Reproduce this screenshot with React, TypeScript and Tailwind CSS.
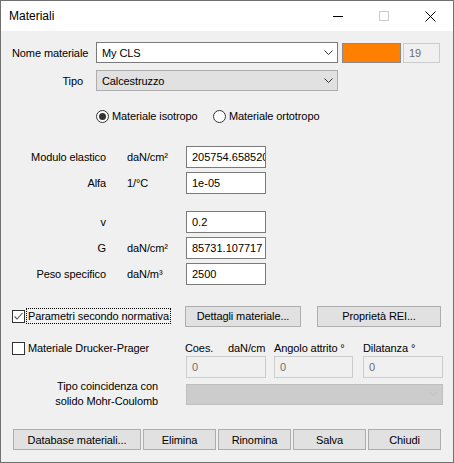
import React from "react";

const F = "font-['Liberation_Sans',sans-serif] text-[11px] leading-[14px] tracking-[-0.1px]";

function Chevron({ color = "#333333" }: { color?: string }) {
  return (
    <svg width="9" height="6" viewBox="0 0 9 6" className="shrink-0">
      <polyline points="0.5,0.5 4.5,4.5 8.5,0.5" fill="none" stroke={color} strokeWidth="1" />
    </svg>
  );
}

function Combo({ text, variant }: { text?: string; variant: "edit" | "list" | "disabled" }) {
  const cls =
    variant === "edit"
      ? "bg-white border-[#7a7a7a]"
      : variant === "list"
      ? "bg-[#e1e1e1] border-[#adadad]"
      : "bg-[#cccccc] border-[#bfbfbf]";
  return (
    <div className={`flex items-center justify-between w-full h-full border ${cls} pl-[5px] pr-[4px]`}>
      <span className="text-black whitespace-nowrap">{text}</span>
      <Chevron color={variant === "disabled" ? "#bfbfbf" : "#333333"} />
    </div>
  );
}

function Input({ value, w = "w-[80px]", disabled }: { value: string; w?: string; disabled?: boolean }) {
  return (
    <div
      className={`${w} h-[22px] shrink-0 border flex items-center pl-[5px] overflow-hidden tracking-normal ${
        disabled ? "bg-[#f0f0f0] border-[#cccccc] text-[#6d6d6d]" : "bg-white border-[#7a7a7a] text-black"
      }`}
    >
      <span className="whitespace-nowrap">{value}</span>
    </div>
  );
}

function Button({ label, w }: { label: string; w: string }) {
  return (
    <div className={`${w} h-[21px] shrink-0 bg-[#e1e1e1] border border-[#adadad] flex items-center justify-center text-black whitespace-nowrap`}>
      {label}
    </div>
  );
}

function Radio({ checked }: { checked?: boolean }) {
  return (
    <div className="w-[13px] h-[13px] rounded-full border border-[#333333] bg-white flex items-center justify-center shrink-0">
      {checked && <div className="w-[7px] h-[7px] rounded-full bg-[#333333]" />}
    </div>
  );
}

function Check({ checked }: { checked?: boolean }) {
  return (
    <div className="w-[13px] h-[13px] border border-[#333333] bg-white flex items-center justify-center shrink-0">
      {checked && (
        <svg width="11" height="11" viewBox="0 0 11 11">
          <polyline points="1.5,5.5 4,8 9.5,2" fill="none" stroke="#555555" strokeWidth="1.1" />
        </svg>
      )}
    </div>
  );
}

function PropRow({ label, unit, value, className = "" }: { label: string; unit: string; value: string; className?: string }) {
  return (
    <div className={`flex items-center h-[22px] ${className}`}>
      <div className="w-[105px] text-right shrink-0 whitespace-nowrap">{label}</div>
      <div className="w-[59px] ml-[21px] shrink-0 whitespace-nowrap">{unit}</div>
      <Input value={value} />
    </div>
  );
}

export default function App() {
  return (
    <div className={`${F} w-[454px] h-[463px] border border-[#707070] bg-[#f0f0f0] flex flex-col text-black`}>
      {/* Title bar */}
      <div className="h-[30px] bg-white flex items-center shrink-0">
        <div className="pl-[8px] flex-1 text-black text-[12px] tracking-normal">Materiali</div>
        <div className="w-[46px] h-full flex items-center justify-center">
          <div className="w-[10px] h-px bg-black" />
        </div>
        <div className="w-[46px] h-full flex items-center justify-center">
          <div className="w-[10px] h-[10px] border border-[#cccccc]" />
        </div>
        <div className="w-[46px] h-full flex items-center justify-center">
          <svg width="11" height="11" viewBox="0 0 11 11">
            <path d="M0.5,0.5 L10.5,10.5 M10.5,0.5 L0.5,10.5" stroke="#000" strokeWidth="1" fill="none" />
          </svg>
        </div>
      </div>

      {/* Nome materiale */}
      <div className="flex items-center h-[21px] mt-[11px]">
        <div className="w-[95px] pl-[11px] shrink-0 whitespace-nowrap">Nome materiale</div>
        <div className="w-[242px] h-[21px] shrink-0">
          <Combo text="My CLS" variant="edit" />
        </div>
        <div className="w-[59px] h-[20px] ml-[4px] bg-[#ff8000] border border-[#8a8a8a] shrink-0" />
        <div className="w-[37px] h-[20px] ml-[2px] border border-[#cccccc] bg-[#f0f0f0] text-[#6d6d6d] flex items-center pl-[5px] shrink-0">
          19
        </div>
      </div>

      {/* Tipo */}
      <div className="flex items-center h-[21px] mt-[7px]">
        <div className="w-[95px] pr-[13px] text-right shrink-0">Tipo</div>
        <div className="w-[242px] h-[21px] shrink-0">
          <Combo text="Calcestruzzo" variant="list" />
        </div>
      </div>

      {/* Radios */}
      <div className="flex items-center h-[16px] mt-[17px] pl-[95px]">
        <div className="flex items-center gap-[3px] w-[117px] shrink-0">
          <Radio checked />
          <span className="whitespace-nowrap">Materiale isotropo</span>
        </div>
        <div className="flex items-center gap-[3px]">
          <Radio />
          <span className="whitespace-nowrap">Materiale ortotropo</span>
        </div>
      </div>

      {/* Properties */}
      <PropRow className="mt-[22px]" label="Modulo elastico" unit="daN/cm²" value="205754.658520" />
      <PropRow className="mt-[4px]" label="Alfa" unit="1/°C" value="1e-05" />
      <PropRow className="mt-[17px]" label="v" unit="" value="0.2" />
      <PropRow className="mt-[4px]" label="G" unit="daN/cm²" value="85731.107717" />
      <PropRow className="mt-[4px]" label="Peso specifico" unit="daN/m³" value="2500" />

      {/* Normativa row */}
      <div className="flex items-center h-[20px] mt-[21px]">
        <div className="w-[184px] pl-[11px] flex items-center shrink-0">
          <Check checked />
          <span className="ml-[1px] px-[1px] border border-dotted border-black leading-[14px] whitespace-nowrap">
            Parametri secondo normativa
          </span>
        </div>
        <Button label="Dettagli materiale..." w="w-[116px] h-[20px]" />
        <div className="ml-[16px]">
          <Button label="Proprietà REI..." w="w-[124px]" />
        </div>
      </div>

      {/* Drucker-Prager */}
      <div className="flex items-center h-[16px] mt-[14px]">
        <div className="w-[184px] pl-[11px] flex items-center gap-[3px] shrink-0">
          <Check />
          <span className="whitespace-nowrap">Materiale Drucker-Prager</span>
        </div>
        <div className="w-[43px] shrink-0">Coes.</div>
        <div className="w-[46px] shrink-0 whitespace-nowrap">daN/cm</div>
        <div className="w-[89px] shrink-0 whitespace-nowrap">Angolo attrito °</div>
        <div className="whitespace-nowrap">Dilatanza °</div>
      </div>
      <div className="flex items-center h-[22px] pl-[185px]">
        <Input value="0" disabled />
        <Input value="0" w="w-[79px] ml-[8px]" disabled />
        <Input value="0" w="w-[80px] ml-[10px]" disabled />
      </div>

      {/* Mohr-Coulomb */}
      <div className="flex items-center h-[30px] mt-[1px]">
        <div className="w-[185px] pr-[28px] text-right shrink-0 leading-[15px]">
          Tipo coincidenza con
          <br />
          solido Mohr-Coulomb
        </div>
        <div className="w-[257px] h-[21px] shrink-0">
          <Combo variant="disabled" />
        </div>
      </div>

      {/* Bottom buttons */}
      <div className="flex items-center gap-[2px] pl-[12px] mt-[20px]">
        <Button label="Database materiali..." w="w-[128px]" />
        <Button label="Elimina" w="w-[73px]" />
        <Button label="Rinomina" w="w-[73px]" />
        <Button label="Salva" w="w-[73px]" />
        <Button label="Chiudi" w="w-[73px]" />
      </div>
    </div>
  );
}
